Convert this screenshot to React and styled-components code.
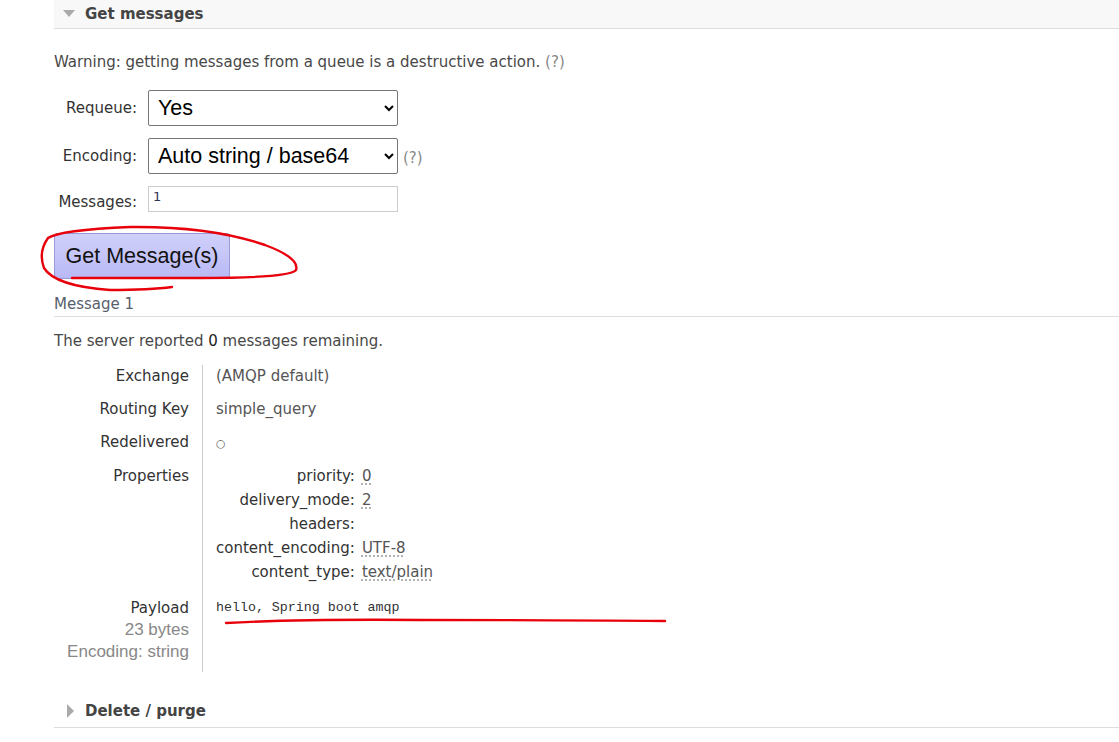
import styled, { createGlobalStyle } from "styled-components";

const Global = createGlobalStyle`
  html, body { margin: 0; padding: 0; background: #fff; }
  body {
    font-family: "DejaVu Sans", Verdana, sans-serif;
    font-size: 15px;
    color: #484848;
  }
`;

const props = [
  { key: "priority", value: "0" },
  { key: "delivery_mode", value: "2" },
  { key: "headers", value: "" },
  { key: "content_encoding", value: "UTF-8" },
  { key: "content_type", value: "text/plain" },
];

export default function App() {
  return (
    <Page>
      <Global />
      <Section>
        <SectionHeader $active $height={28}>
          <Arrow $open />
          <Title>Get messages</Title>
        </SectionHeader>

        <Warning>
          Warning: getting messages from a queue is a destructive action. <Help>(?)</Help>
        </Warning>

        <Form>
          <FormLabel>Requeue:</FormLabel>
          <FieldRow>
            <Select defaultValue="yes">
              <option value="yes">Yes</option>
              <option value="no">No</option>
            </Select>
          </FieldRow>

          <FormLabel>Encoding:</FormLabel>
          <FieldRow>
            <Select defaultValue="auto">
              <option value="auto">Auto string / base64</option>
              <option value="base64">base64</option>
            </Select>
            <Help $nudge={2}>(?)</Help>
          </FieldRow>

          <FormLabel $nudge={3}>Messages:</FormLabel>
          <FieldRow>
            <NumberInput defaultValue="1" />
          </FieldRow>
        </Form>

        <Button>Get Message(s)</Button>

        <MessageTitle>Message 1</MessageTitle>

        <Remaining>
          The server reported <Strong>0</Strong> messages remaining.
        </Remaining>

        <Details>
          <Key>Exchange</Key>
          <Val>(AMQP default)</Val>

          <Key>Routing Key</Key>
          <Val>simple_query</Val>

          <Key>Redelivered</Key>
          <Val><Circle>○</Circle></Val>

          <Key>Properties</Key>
          <Val>
            <PropGrid>
              {props.map((p) => (
                <PropRow key={p.key}>
                  <PropKey>{p.key}:</PropKey>
                  <PropVal>{p.value && <Abbr>{p.value}</Abbr>}</PropVal>
                </PropRow>
              ))}
            </PropGrid>
          </Val>

          <Key $last>
            <KeyLine>Payload</KeyLine>
            <SubLine>23 bytes</SubLine>
            <SubLine>Encoding: string</SubLine>
          </Key>
          <Val $last>
            <Payload>hello, Spring boot amqp</Payload>
          </Val>
        </Details>
      </Section>

      <SectionHeader $height={32} $gap={23}>
        <Arrow />
        <Title>Delete / purge</Title>
      </SectionHeader>

      <Scribble viewBox="0 0 1119 742" width="1119" height="742">
        <path
          d="M72 278 L200 278 Q290 278 296 270 Q300 258 265 245 Q210 226 130 227 Q60 230 48 238 Q38 252 44 268 Q55 286 110 290 Q150 290 172 287"
          fill="none"
          stroke="#e8000b"
          strokeWidth="2.4"
          strokeLinecap="round"
        />
        <path
          d="M226 623 Q300 619 420 620 Q560 620 665 621"
          fill="none"
          stroke="#e8000b"
          strokeWidth="2.4"
          strokeLinecap="round"
        />
      </Scribble>
    </Page>
  );
}

// ─── Styled components ───

const Page = styled.div`
  position: relative;
  padding-left: 54px;
  min-height: 742px;
  overflow: hidden;
`;

const Section = styled.div`
  display: flex;
  flex-direction: column;
  align-items: flex-start;
`;

const SectionHeader = styled.div`
  align-self: stretch;
  display: flex;
  align-items: center;
  gap: 10px;
  height: ${({ $height }) => $height}px;
  margin-top: ${({ $gap }) => $gap || 0}px;
  padding-left: 9px;
  background: ${({ $active }) => ($active ? "#f8f8f8" : "#fff")};
  border-bottom: 1px solid #ddd;
`;

const Arrow = styled.span`
  width: 0;
  height: 0;
  border-style: solid;
  border-color: transparent;
  ${({ $open }) =>
    $open
      ? `border-width: 7px 6px 0 6px; border-top-color: #aaa; margin-top: -1px;`
      : `border-width: 7px 0 7px 7px; border-left-color: #aaa; margin-left: 4px; margin-right: 1px;`}
`;

const Title = styled.h2`
  margin: 0;
  font-size: 15px;
  font-weight: bold;
  color: #444;
`;

const Warning = styled.p`
  margin: 24px 0 0;
  line-height: 18px;
`;

const Help = styled.span`
  color: #888;
  position: relative;
  top: ${({ $nudge }) => $nudge || 0}px;
`;

const Form = styled.div`
  display: grid;
  grid-template-columns: 83px auto;
  column-gap: 11px;
  row-gap: 12px;
  align-items: center;
  margin-top: 19px;
`;

const FormLabel = styled.label`
  justify-self: end;
  white-space: nowrap;
  color: #333;
  position: relative;
  top: ${({ $nudge }) => $nudge || 0}px;
`;

const FieldRow = styled.div`
  display: flex;
  align-items: center;
  gap: 5px;
`;

const Select = styled.select`
  box-sizing: border-box;
  width: 250px;
  height: 36px;
  padding: 0 5px;
  font-family: "Liberation Sans", Arial, sans-serif;
  font-size: 21.5px;
  color: #000;
  background: #fff;
  border: 1px solid #767676;
  border-radius: 2px;
`;

const NumberInput = styled.input`
  box-sizing: border-box;
  width: 250px;
  height: 26px;
  padding: 0 4px 5px;
  font-family: "DejaVu Sans", sans-serif;
  font-size: 13px;
  color: #335;
  border: 1px solid #ccc;
  outline: none;
`;

const Button = styled.button`
  box-sizing: border-box;
  margin-top: 21px;
  width: 176px;
  height: 46px;
  padding: 0;
  font-family: "Liberation Sans", Arial, sans-serif;
  font-size: 21.5px;
  color: #111;
  background: linear-gradient(#d0d0fb, #b9b9f6);
  border: 1px solid #9a9ad8;
  border-radius: 3px;
`;

const MessageTitle = styled.div`
  align-self: stretch;
  margin-top: 16px;
  padding-bottom: 3px;
  line-height: 18px;
  color: #56606c;
  border-bottom: 1px solid #ddd;
`;

const Remaining = styled.p`
  margin: 15px 0 0;
  line-height: 18px;
`;

const Strong = styled.span`
  color: #222;
`;

const Details = styled.div`
  display: grid;
  grid-template-columns: 148px auto;
  margin-top: 15px;
`;

const Key = styled.div`
  box-sizing: border-box;
  padding: 3px 13px ${({ $last }) => ($last ? 9 : 13)}px 0;
  text-align: right;
  line-height: 17px;
  color: #333;
`;

const Val = styled.div`
  padding: 3px 0 ${({ $last }) => ($last ? 9 : 13)}px 13px;
  line-height: 17px;
  color: #555;
  border-left: 1px solid #ccc;
`;

const KeyLine = styled.div`
  line-height: 22px;
`;

const SubLine = styled.div`
  line-height: 22px;
  font-family: "Liberation Sans", Arial, sans-serif;
  font-size: 17px;
  color: #888;
`;

const Circle = styled.span`
  font-size: 11px;
  color: #666;
`;

const PropGrid = styled.div`
  display: grid;
  grid-template-columns: auto auto;
  justify-content: start;
  row-gap: 7px;
  column-gap: 7px;
`;

const PropRow = styled.div`
  display: contents;
`;

const PropKey = styled.span`
  text-align: right;
  color: #333;
`;

const PropVal = styled.span`
  color: #555;
`;

const Abbr = styled.abbr`
  text-decoration: underline dotted #999;
  text-underline-offset: 3px;
`;

const Payload = styled.pre`
  margin: 0;
  line-height: 22px;
  font-family: "Liberation Mono", "Courier New", monospace;
  font-size: 13.3px;
  color: #333;
`;

const Scribble = styled.svg`
  position: absolute;
  left: 0;
  top: 0;
  pointer-events: none;
`;
